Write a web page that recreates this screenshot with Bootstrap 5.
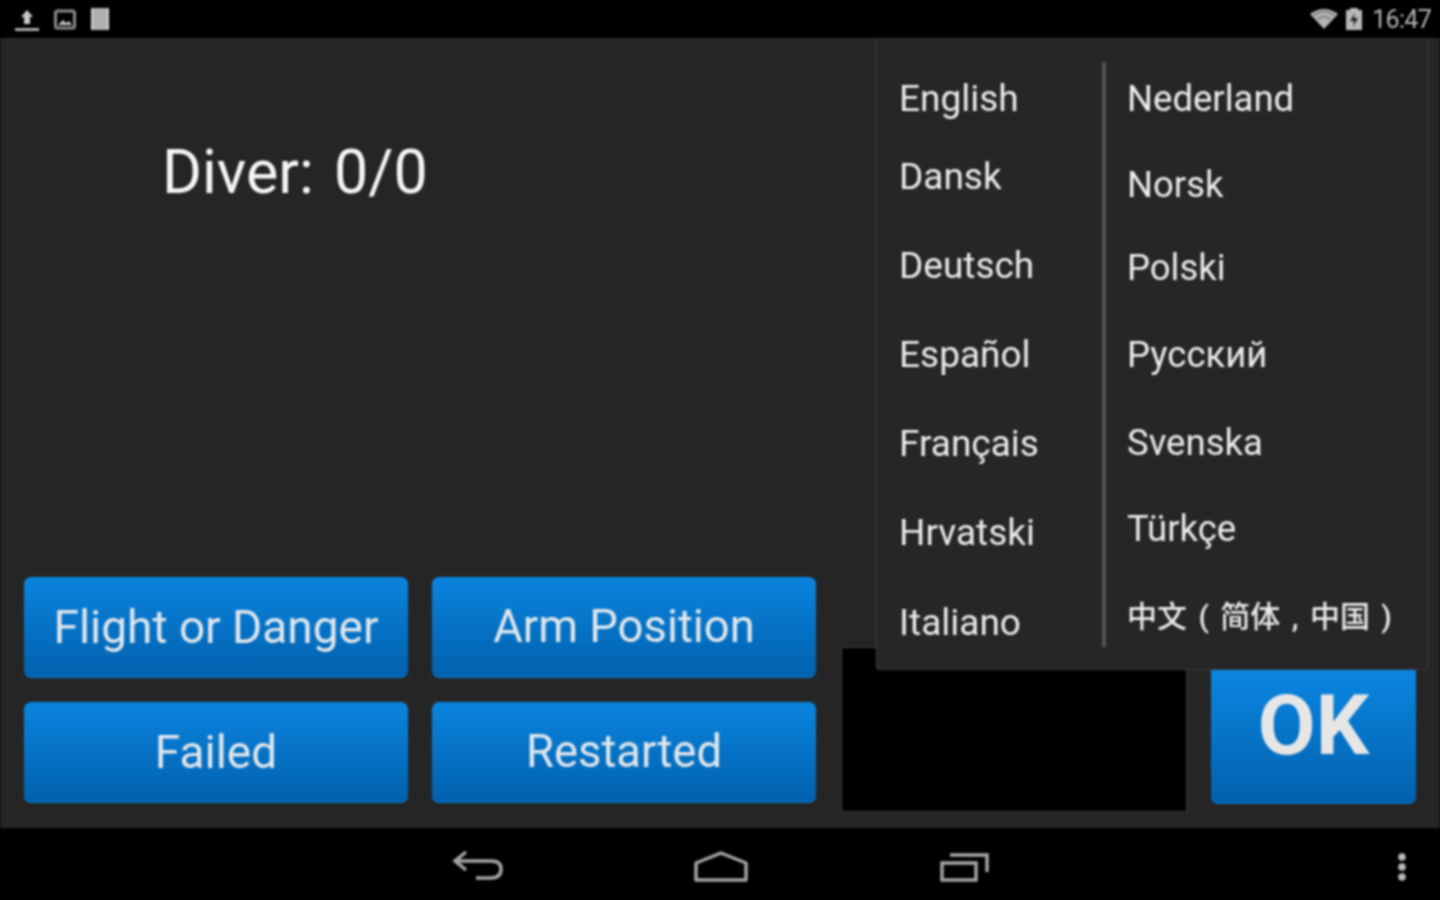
<!DOCTYPE html>
<html lang="en">

<head>
    <meta charset="UTF-8">
    <meta name="viewport" content="width=device-width, initial-scale=1.0">
    <link href="https://cdn.jsdelivr.net/npm/bootstrap@5.3.3/dist/css/bootstrap.min.css" rel="stylesheet">
    <title>Diver</title>

    <style>
        html, body {
            height: 100%;
            margin: 0;
            background: #000;
            overflow: hidden;
        }

        .screen {
            width: 1440px;
            height: 900px;
            font-family: Roboto, "Noto Sans CJK SC", sans-serif;
            filter: blur(1px);
        }

        .status-bar {
            height: 38px;
            background: #000;
            padding: 0 9px 0 14px;
        }

        .status-left {
            gap: 14px;
        }

        .clock {
            font-size: 25px;
            letter-spacing: -0.7px;
            color: #b4b4b4;
            line-height: 1;
            margin-left: 9px;
        }

        .charge-icon {
            margin-left: 6px;
        }

        .stage {
            height: 790px;
            background: #252525;
            border-top: 1px solid #2e2e2e;
            padding: 0 25px 25px 24px;
        }

        .left-pane {
            width: 792px;
        }

        .diver-label {
            font-size: 61px;
            line-height: 68px;
            color: #f4f4f4;
            margin: 99px 0 0 138px;
            word-spacing: 5px;
        }

        .action-grid {
            display: grid;
            grid-template-columns: 384px 384px;
            grid-auto-rows: 101px;
            gap: 24px;
        }

        .action-btn {
            background: linear-gradient(#0a84de, #0261ae);
            border: 0;
            border-bottom: 1px solid #0a7cd0;
            border-radius: 7px;
            color: #dfe6ec;
            font-size: 46px;
            line-height: 1;
            padding: 0;
        }

        .action-grid .action-btn:nth-child(even) {
            font-size: 45.4px;
        }

        .preview-box {
            width: 346px;
            height: 165px;
            background: #000;
            border: 1px solid #3a3a3a;
            margin: 0 0 -9px 25px;
        }

        .ok-btn {
            width: 205px;
            height: 228px;
            margin: 0 0 -1px 24px;
            font-size: 84px;
            font-weight: 700;
            color: #e6e6e6;
            background: linear-gradient(#0a84de 45%, #0261ae);
            padding-top: 73px;
        }

        .lang-menu {
            position: absolute;
            left: 876px;
            top: 38px;
            width: 552px;
            height: 632px;
            background: #262626;
            border: 1px solid #3c3c3c;
            border-top-color: #333;
            border-radius: 3px;
            padding-top: 23px;
        }

        .lang-col {
            height: 585px;
            list-style: none;
            margin: 0;
            padding: 0;
        }

        .lang-left {
            width: 229px;
            padding-left: 22px;
            border-right: 4px solid #555;
        }

        .lang-right {
            padding-left: 21px;
        }

        .lang-col li {
            height: 42px;
            font-size: 36.5px;
            line-height: 42px;
            color: #ececec;
            white-space: nowrap;
        }

        .lang-left li {
            font-size: 37px;
        }

        .lang-col li:first-child { margin-top: 16px; }
        .lang-left li:nth-child(2) { margin-top: 36px; }
        .lang-left li:nth-child(n+3) { margin-top: 47px; }
        .lang-left li:last-child { margin-top: 48px; }
        .lang-right li:nth-child(2) { margin-top: 44px; }
        .lang-right li:nth-child(3) { margin-top: 41px; }
        .lang-right li:nth-child(4) { margin-top: 45px; }
        .lang-right li:nth-child(5) { margin-top: 46px; }
        .lang-right li:nth-child(6) { margin-top: 44px; }
        .lang-right li:nth-child(7) { margin-top: 46px; font-size: 30px; font-weight: 500; word-spacing: 4px; }

        .nav-bar {
            height: 72px;
            background: #000;
        }

        .nav-icons {
            padding: 6px 0 0 452px;
            gap: 189px;
        }

        .overflow-btn {
            margin: 6px 33px 0 0;
        }
    </style>
</head>

<body>
    <div class="screen d-flex flex-column position-relative">
        <header class="status-bar d-flex align-items-center justify-content-between">
            <div class="status-left d-flex align-items-center">
                <svg width="26" height="26" viewBox="0 0 26 26">
                    <path d="M13 4 L19 11 H16 V18 H10 V11 H7 Z" fill="#c8c8c8" />
                    <rect x="1" y="22" width="24" height="3" fill="#aaa" />
                </svg>
                <svg width="22" height="22" viewBox="0 0 22 22">
                    <rect x="1.5" y="3" width="19" height="17" rx="2" fill="none" stroke="#8a8a8a" stroke-width="3" />
                    <path d="M4 17 L9 12 L12 15 L15 13 L18 17 Z" fill="#c4c4c4" />
                </svg>
                <svg width="20" height="24" viewBox="0 0 20 24">
                    <rect x="1" y="1" width="18" height="22" fill="#b0b0b0" />
                    <rect x="1" y="1" width="2" height="22" fill="#d2d2d2" />
                    <rect x="17" y="1" width="2" height="22" fill="#d2d2d2" />
                </svg>
            </div>
            <div class="d-flex align-items-center">
                <svg width="30" height="22" viewBox="0 0 30 22">
                    <path d="M1 6 Q15 -4 29 6 L15 21 Z" fill="#b4b4b4" />
                    <path d="M5 7 Q15 0 25 7" fill="none" stroke="#555" stroke-width="1.2" />
                    <path d="M9 11 Q15 6 21 11" fill="none" stroke="#555" stroke-width="1.2" />
                </svg>
                <svg class="charge-icon" width="18" height="24" viewBox="0 0 18 24">
                    <path d="M5 1 H13 V3 H17 V23 H1 V3 H5 Z" fill="#b8b8b8" />
                    <path d="M10 6 L5 14 H9 L8 20 L13 11 H9 Z" fill="#222" />
                </svg>
                <span class="clock">16:47</span>
            </div>
        </header>

        <main class="stage d-flex align-items-end">
            <div class="left-pane h-100 d-flex flex-column justify-content-between">
                <div class="diver-label">Diver: 0/0</div>
                <div class="action-grid">
                    <button class="action-btn">Flight or Danger</button>
                    <button class="action-btn">Arm Position</button>
                    <button class="action-btn">Failed</button>
                    <button class="action-btn">Restarted</button>
                </div>
            </div>
            <div class="preview-box flex-shrink-0"></div>
            <button class="action-btn ok-btn flex-shrink-0">OK</button>
        </main>

        <div class="lang-menu d-flex">
            <ul class="lang-col lang-left">
                <li>English</li>
                <li>Dansk</li>
                <li>Deutsch</li>
                <li>Español</li>
                <li>Français</li>
                <li>Hrvatski</li>
                <li>Italiano</li>
            </ul>
            <ul class="lang-col lang-right">
                <li>Nederland</li>
                <li>Norsk</li>
                <li>Polski</li>
                <li>Русский</li>
                <li>Svenska</li>
                <li>Türkçe</li>
                <li lang="zh-CN">中文 ( 简体 , 中国 )</li>
            </ul>
        </div>

        <footer class="nav-bar d-flex align-items-center justify-content-between">
            <div class="nav-icons d-flex align-items-center">
                <svg width="52" height="34" viewBox="0 0 52 34">
                    <path d="M14 2 L3 11 L14 20 M3 11 H39 Q49 11 49 19 Q49 28 39 28 H24" fill="none" stroke="#a4a4a4" stroke-width="3.5" />
                </svg>
                <svg width="56" height="34" viewBox="0 0 56 34">
                    <path d="M3 30 V13 L28 3 L53 13 V30 Z" fill="none" stroke="#a4a4a4" stroke-width="3.5" stroke-linejoin="round" />
                </svg>
                <svg width="52" height="34" viewBox="0 0 52 34">
                    <rect x="4" y="13" width="34" height="17" fill="none" stroke="#a4a4a4" stroke-width="3.5" />
                    <path d="M12 5 H49 V22" fill="none" stroke="#a4a4a4" stroke-width="3.5" />
                </svg>
            </div>
            <svg class="overflow-btn" width="10" height="30" viewBox="0 0 10 30">
                <circle cx="5" cy="5" r="3.8" fill="#b8b8b8" />
                <circle cx="5" cy="15" r="3.8" fill="#b8b8b8" />
                <circle cx="5" cy="25" r="3.8" fill="#b8b8b8" />
            </svg>
        </footer>
    </div>
    <script src="https://cdn.jsdelivr.net/npm/bootstrap@5.3.3/dist/js/bootstrap.bundle.min.js"></script>
</body>

</html>
